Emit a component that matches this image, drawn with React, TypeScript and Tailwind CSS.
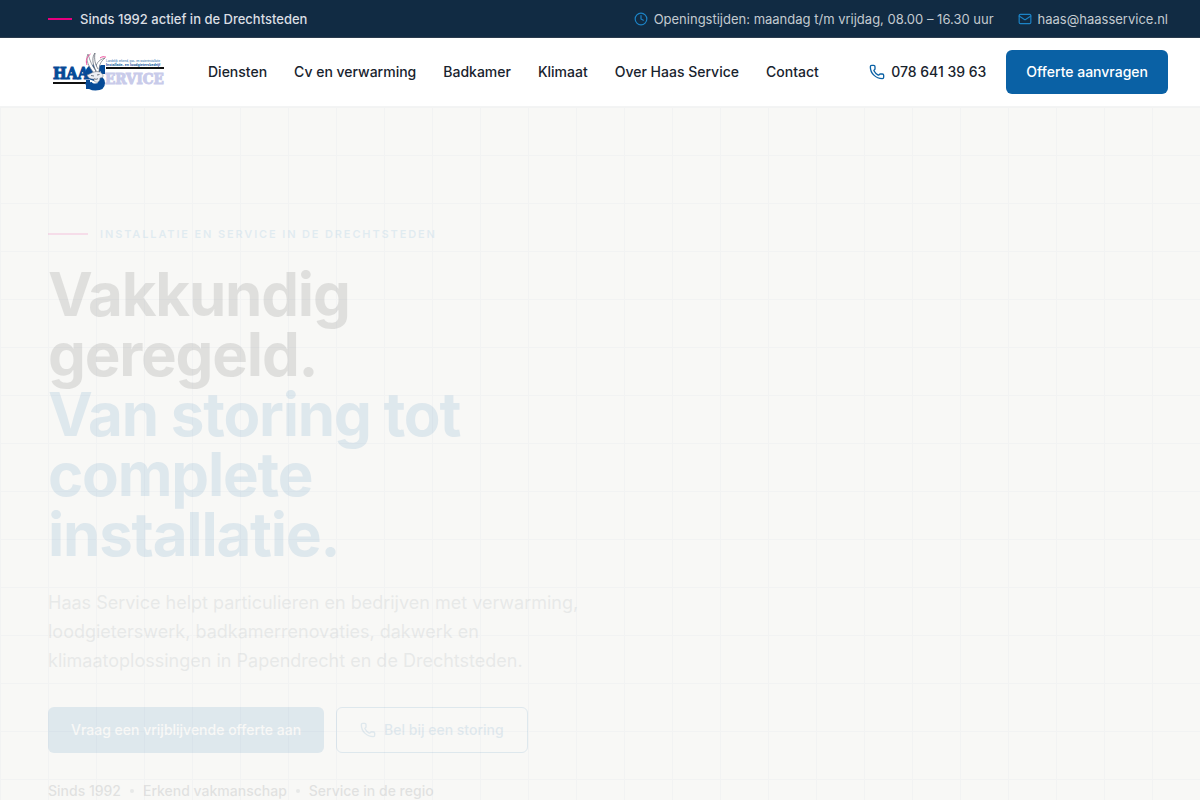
import { Clock, Mail, Phone } from "lucide-react";

const navLinks = [
  { label: "Diensten", href: "#diensten" },
  { label: "Cv en verwarming", href: "#cv" },
  { label: "Badkamer", href: "#badkamer" },
  { label: "Klimaat", href: "#klimaat" },
  { label: "Over Haas Service", href: "#over" },
  { label: "Contact", href: "#contact" },
];

const trustItems = ["Sinds 1992", "Erkend vakmanschap", "Service in de regio"];

function Logo() {
  return (
    <svg viewBox="0 0 120 44" className="h-11 w-[120px]" role="img" aria-label="Haas Service">
      <g fontFamily="'DejaVu Serif Condensed', 'DejaVu Serif', serif" fontWeight="bold">
        <text x="5" y="29" fontSize="16" fill="#064a97" stroke="#064a97" strokeWidth="1">HAA</text>
        <text x="57" y="34" fontSize="15" fill="#c9cbea" stroke="#c9cbea" strokeWidth="1">ERVICE</text>
      </g>
      <rect x="5" y="32" width="34" height="2" fill="#111" />
      <rect x="58" y="17" width="58" height="2" fill="#111" />
      <g fontFamily="'Liberation Sans', sans-serif" fill="#2767aa">
        <text x="58" y="12" fontSize="3">Landelijk erkend, gas- en waterinstallatie</text>
        <text x="58" y="15.500" fontSize="3.600" fontWeight="bold" fill="#064a97">Installatie- en loodgietersbedrijf</text>
      </g>
      {/* big S */}
      <path
        d="M54 21c-1-2.500-3.500-3-7-3-4 0-6 2-6 4.500 0 3.500 3 4.500 6 5.200 3.500.8 6.500 1.800 6.500 5.300 0 3-2.500 4-6 4s-6.500-1.500-7-4.500"
        fill="none"
        stroke="#064a97"
        strokeWidth="7"
      />
      <path d="M53 15h4v9h-4zM38 30h4v9h-4z" fill="#064a97" />
      {/* hare */}
      <path d="M46 23C41 17 37 10 40 4c2 7 4 12 8 17zM48 22c-1-8 2-12 9-14-5 4-6 8-6 14z" fill="#fff" stroke="#70757f" strokeWidth="0.7" />
      <path d="M48 21C44 13 44 7 47 3c-1 6 0 11 3 16" fill="#fff" stroke="#555c69" strokeWidth="0.7" />
      <path d="M39 15c-1.500-4-.5-8 3.500-11M52 8c2-1.500 4-1.500 6-.8" fill="none" stroke="#ef4c9b" strokeWidth="1" />
      <path d="M39 25c3-1 4-2 7-3 4-1 8 0 9 3 .5 2-1 3-3 3 0 3-2 5-4 4-2 0-2-1-2-3-3 .5-6-1-7-4z" fill="#eceef3" stroke="#6c7381" strokeWidth="0.5" />
      <path d="M43 25.500l3 .5M49 25l2.500-.5M46 28.500c1 1 3 1 4 0" stroke="#3b4658" strokeWidth="0.7" fill="none" />
    </svg>
  );
}

function TopBar() {
  return (
    <div className="border-b border-[#2a3b4d] bg-[#112b43] text-[13px] leading-5">
      <div className="flex items-center justify-between pt-[9px] pr-8 pb-2 pl-12">
        <p className="flex items-center gap-2 font-medium text-[#dbdfe3]">
          <span className="h-0.5 w-6 bg-[#e6007e]" />
          Sinds 1992 actief in de Drechtsteden
        </p>
        <div className="flex items-center gap-6 text-[#c3cad0]">
          <span className="flex items-center gap-[6px]">
            <Clock className="h-3.5 w-3.5 text-[#1c83c6]" />
            Openingstijden: maandag t/m vrijdag, 08.00 – 16.30 uur
          </span>
          <a href="mailto:haas@haasservice.nl" className="flex items-center gap-[6px]">
            <Mail className="h-3.5 w-3.5 text-[#1c83c6]" />
            haas@haasservice.nl
          </a>
        </div>
      </div>
    </div>
  );
}

function Header() {
  return (
    <header className="border-b border-[#f3f4f4] bg-white">
      <div className="flex items-center py-3 pr-8 pl-12">
        <a href="#top" className="shrink-0">
          <Logo />
        </a>
        <nav className="ml-10 flex items-center gap-[27px] text-sm font-medium text-[#18232d]">
          {navLinks.map((link) => (
            <a key={link.label} href={link.href} className="whitespace-nowrap">
              {link.label}
            </a>
          ))}
        </nav>
        <div className="ml-auto flex items-center gap-5 text-sm">
          <a href="tel:0786413963" className="flex items-center gap-[6px] font-medium whitespace-nowrap text-[#18232d]">
            <Phone className="h-4 w-4 text-[#0a61a5]" />
            078 641 39 63
          </a>
          <a href="#offerte" className="flex h-11 items-center rounded-md bg-[#0a61a5] px-5 font-medium whitespace-nowrap text-white">
            Offerte aanvragen
          </a>
        </div>
      </div>
    </header>
  );
}

function Hero() {
  return (
    <section className="grow bg-[#f8f8f6] bg-[linear-gradient(to_right,#f2f3f3_1px,transparent_1px),linear-gradient(to_bottom,#f2f3f3_1px,transparent_1px)] bg-[size:48px_48px]">
      <div className="grid grid-cols-2 gap-12 pt-[117px] pr-8 pl-12">
        {/* fades in on load */}
        <div className="opacity-10">
          <p className="flex items-center gap-3 text-[11px] leading-5 font-semibold tracking-[0.17em] whitespace-nowrap text-[#1c83c6] uppercase">
            <span className="h-0.5 w-10 bg-[#e6007e]" />
            Installatie en service in de Drechtsteden
          </p>
          <h1 className="mt-5 text-[60px] leading-[60px] font-bold tracking-[-0.02em] text-[#111111]">
            Vakkundig
            <br />
            geregeld.
            <span className="block text-[#0a61a5]">
              Van storing tot
              <br />
              complete
              <br />
              installatie.
            </span>
          </h1>
          <p className="mt-6 text-lg leading-[29px] text-[#5e6b76]">
            Haas Service helpt particulieren en bedrijven met verwarming, loodgieterswerk, badkamerrenovaties, dakwerk en
            klimaatoplossingen in Papendrecht en de Drechtsteden.
          </p>
          <div className="mt-8 flex gap-3 text-sm font-medium whitespace-nowrap">
            <a href="#offerte" className="flex h-[46px] items-center rounded-md bg-[#0a61a5] px-[23px] text-white">
              Vraag een vrijblijvende offerte aan
            </a>
            <a href="tel:0786413963" className="flex h-[46px] items-center gap-2 rounded-md border border-[#0a61a5] px-[23px] text-[#0a61a5]">
              <Phone className="h-4 w-4" />
              Bel bij een storing
            </a>
          </div>
          <ul className="mt-7 flex items-center gap-[9px] text-sm leading-5 font-medium whitespace-nowrap text-[#18232d]">
            {trustItems.map((item, index) => (
              <li key={item} className="flex items-center gap-[9px]">
                {index > 0 && <span className="h-1 w-1 rounded-full bg-[#5e6b76]" />}
                {item}
              </li>
            ))}
          </ul>
        </div>
      </div>
    </section>
  );
}

export default function App() {
  return (
    <div id="top" className="flex h-screen flex-col overflow-hidden font-['Inter','Liberation_Sans',sans-serif]">
      <TopBar />
      <Header />
      <Hero />
    </div>
  );
}
